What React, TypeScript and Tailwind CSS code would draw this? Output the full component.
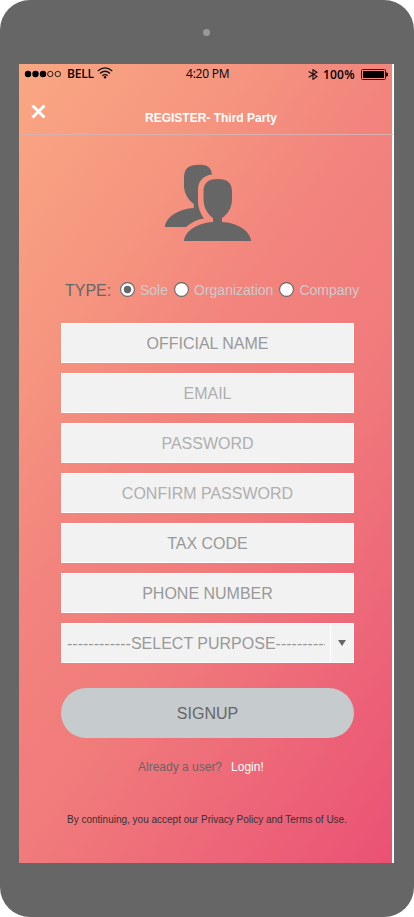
import React from "react";

const sans = "font-['Liberation_Sans',Arial,sans-serif]";

function Field({ label, light = false }: { label: string; light?: boolean }) {
  return (
    <input
      aria-label={label}
      placeholder={label}
      className={`block h-10 w-full border border-white bg-[#f2f2f2] p-0 pt-0.5 text-center text-base outline-none ${
        light ? "placeholder:text-[#afafaf]" : "placeholder:text-[#999999]"
      }`}
    />
  );
}

function Radio({ label, checked = false }: { label: string; checked?: boolean }) {
  return (
    <label className="flex items-center gap-[5px] text-sm text-[#cccccc]">
      <svg width="15" height="15" viewBox="0 0 15 15" className="-mt-0.5 shrink-0">
        <circle cx="7.5" cy="7.5" r="6.9" fill="#fff" stroke="#666" strokeWidth="1.1" />
        {checked && <circle cx="7.5" cy="7.5" r="3.7" fill="#666" />}
      </svg>
      <span className="whitespace-nowrap">{label}</span>
    </label>
  );
}

function StatusBar() {
  return (
    <div className="flex h-5 w-full items-center font-['Open_Sans','Noto_Sans',sans-serif] text-xs text-black">
      <svg width="38" height="8" viewBox="0 0 38 8" className="ml-[5px]">
        <circle cx="4" cy="4" r="3.2" />
        <circle cx="11.5" cy="4" r="3.2" />
        <circle cx="19" cy="4" r="3.2" />
        <circle cx="26.3" cy="4" r="2.7" fill="none" stroke="#111" strokeWidth="0.9" />
        <circle cx="33.8" cy="4" r="2.7" fill="none" stroke="#111" strokeWidth="0.9" />
      </svg>
      <span className="ml-[5px] w-[27px] font-semibold leading-5 tracking-[-0.2px]">BELL</span>
      <svg width="16" height="12" viewBox="0 0 16 12" className="ml-[3px] -mt-0.5" fill="none" stroke="#111" strokeWidth="1.3">
        <path d="M.7 4.1Q8-2.3 15.3 4.1M3 6.5Q8 2.1 13 6.5M5.3 8.8Q8 6.6 10.7 8.8" />
        <circle cx="8" cy="10.2" r="1.2" fill="#111" stroke="none" />
      </svg>
      <span className="ml-[73px] w-[45px] whitespace-nowrap leading-5 tracking-[-0.2px]">4:20 PM</span>
      <svg width="10" height="11" viewBox="0 0 10 11" className="ml-[77px] mt-px" fill="none" stroke="#111" strokeWidth="1.1">
        <path d="M.7 2.500 9 7.600 5 10.300V.7L9 3.200.7 8.300" />
      </svg>
      <span className="ml-[5px] mt-0.5 w-[35px] font-semibold leading-5 tracking-[0.2px]">100%</span>
      <svg width="28" height="12" viewBox="0 0 28 12" className="ml-[2px]">
        <rect x="1.500" y="1.500" width="24" height="10" rx="1" fill="none" stroke="#301b1b" />
        <rect x="3" y="3" width="21" height="7" />
        <path d="M26 4.500h1l1 1v2l-1 1h-1z" />
      </svg>
    </div>
  );
}

function PeopleIcon() {
  return (
    <svg width="88" height="78" viewBox="164 164 88 78" fill="#666">
      <path d="M212 174.5C211 167 207 164.8 199 164.8C188.500 164.800 184 168.500 184 178V185.500C184 193 188 200 193.800 204V208C180.500 208.500 165.500 216.500 165 227H186C191 222.500 197 219.500 204 218.500C200.500 214 198 207 198 202V190C198 181.500 203 175.500 212 174.500Z" />
      <path d="M217.800 179C207.500 179 203.500 183 203.500 192V199C203.500 207.500 207.500 214 213 218V222C199.500 222.500 184.500 230.500 184 241H251C250.500 230.500 236 222.500 222 222V218C228 214 232 207.500 232 199V192C232 183 228 179 217.800 179Z" />
    </svg>
  );
}

export default function App() {
  return (
    <div className="w-[414px] bg-white">
      <div className={`flex h-[917px] w-[414px] flex-col rounded-[30px] bg-[#666666] ${sans}`}>
        <div className="flex h-16 w-[413px] shrink-0 items-center justify-center">
          <span className="size-[7px] rounded-full bg-[#999999]" />
        </div>
        <div className="ml-[19px] flex h-[799px] w-[375px] shrink-0 flex-col bg-white">
          <main className="flex h-full w-[373px] flex-col bg-[linear-gradient(125deg,#faa782_0%,#f5947f_25%,#f2837d_42%,#f07b7b_60%,#ed6678_80%,#ea5174_100%)]">
            <StatusBar />
            <header className="ml-0.5 flex h-[51px] w-[372px] shrink-0 border-b border-[#d9b0ae]">
              <button aria-label="Close" className="ml-[10px] mt-5 size-[15px]">
                <svg width="15" height="15" viewBox="0 0 15 15" stroke="white" strokeWidth="3">
                  <path d="m1.500 1.500 12 12m0-12-12 12" />
                </svg>
              </button>
              <h1 className="ml-[99px] mt-[26px] whitespace-nowrap text-xs font-bold leading-4 text-white">
                REGISTER- Third Party
              </h1>
            </header>
            <div className="ml-[145px] mt-[29px] h-[78px] shrink-0">
              <PeopleIcon />
            </div>
            <div className="ml-[46px] mt-[38px] flex h-5 shrink-0 items-center">
              <span className="mr-[9px] w-[46px] pt-0.5 text-base leading-5 text-[#666666]">TYPE:</span>
              <div className="flex items-center gap-1.5">
                <Radio label="Sole" checked />
                <Radio label="Organization" />
                <Radio label="Company" />
              </div>
            </div>
            <form className="ml-[42px] mt-[23px] flex w-[293px] flex-col gap-2.5">
              <Field label="OFFICIAL NAME" />
              <Field label="EMAIL" light />
              <Field label="PASSWORD" light />
              <Field label="CONFIRM PASSWORD" light />
              <Field label="TAX CODE" />
              <Field label="PHONE NUMBER" />
              <div className="flex h-10 border border-white bg-[#f2f2f2] text-base text-[#999999]">
                <span className="ml-[5px] w-[258px] overflow-hidden whitespace-nowrap leading-[40px]">
                  ------------SELECT PURPOSE----------
                </span>
                <span className="ml-[5px] flex flex-1 items-center justify-center border-l border-white">
                  <svg width="8" height="6" viewBox="0 0 8 6" fill="#666">
                    <path d="M0 0h8L4 6z" />
                  </svg>
                </span>
              </div>
              <button type="button" className="mt-[15px] h-[50px] rounded-full bg-[#c6cbce] pt-0.5 text-base text-[#666666]">
                SIGNUP
              </button>
            </form>
            <p className="ml-[119px] mt-5 flex gap-[9px] whitespace-nowrap text-xs leading-[18px] text-[#666666]">
              <span>Already a user?</span>
              <a className="text-white">Login!</a>
            </p>
            <p className="ml-12 mt-9 whitespace-nowrap text-[10px] leading-4 text-[#333333]">
              By continuing, you accept our Privacy Policy and Terms of Use.
            </p>
          </main>
        </div>
      </div>
    </div>
  );
}
